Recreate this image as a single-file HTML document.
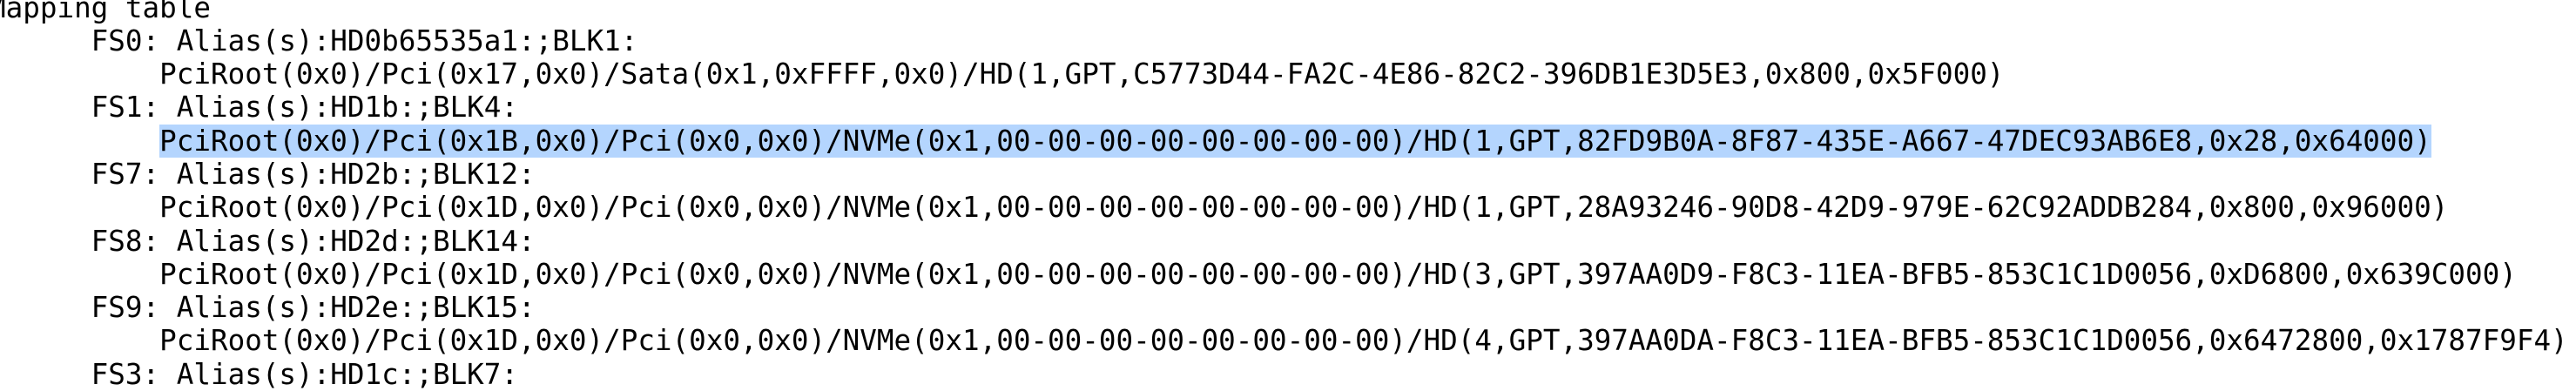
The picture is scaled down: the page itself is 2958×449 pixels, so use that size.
<!DOCTYPE html>
<html><head><meta charset="utf-8"><style>
html,body{margin:0;padding:0;background:#fff;width:2958px;height:442px;overflow:hidden}
pre{position:absolute;left:-13px;top:-10.5px;margin:0;font-family:"DejaVu Sans Mono","Liberation Mono",monospace;font-size:32.6px;line-height:38.3px;color:#000;white-space:pre}
.h{background:#b4d5fe}
</style></head><body>
<pre>Mapping table
      FS0: Alias(s):HD0b65535a1:;BLK1:
          PciRoot(0x0)/Pci(0x17,0x0)/Sata(0x1,0xFFFF,0x0)/HD(1,GPT,C5773D44-FA2C-4E86-82C2-396DB1E3D5E3,0x800,0x5F000)
      FS1: Alias(s):HD1b:;BLK4:
          <span class="h">PciRoot(0x0)/Pci(0x1B,0x0)/Pci(0x0,0x0)/NVMe(0x1,00-00-00-00-00-00-00-00)/HD(1,GPT,82FD9B0A-8F87-435E-A667-47DEC93AB6E8,0x28,0x64000)</span>
      FS7: Alias(s):HD2b:;BLK12:
          PciRoot(0x0)/Pci(0x1D,0x0)/Pci(0x0,0x0)/NVMe(0x1,00-00-00-00-00-00-00-00)/HD(1,GPT,28A93246-90D8-42D9-979E-62C92ADDB284,0x800,0x96000)
      FS8: Alias(s):HD2d:;BLK14:
          PciRoot(0x0)/Pci(0x1D,0x0)/Pci(0x0,0x0)/NVMe(0x1,00-00-00-00-00-00-00-00)/HD(3,GPT,397AA0D9-F8C3-11EA-BFB5-853C1C1D0056,0xD6800,0x639C000)
      FS9: Alias(s):HD2e:;BLK15:
          PciRoot(0x0)/Pci(0x1D,0x0)/Pci(0x0,0x0)/NVMe(0x1,00-00-00-00-00-00-00-00)/HD(4,GPT,397AA0DA-F8C3-11EA-BFB5-853C1C1D0056,0x6472800,0x1787F9F4)
      FS3: Alias(s):HD1c:;BLK7:
</pre>
</body></html>
